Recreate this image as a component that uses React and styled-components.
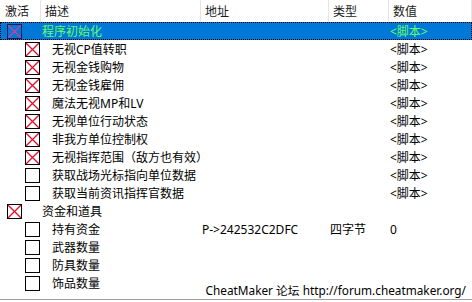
import React from "react";
import styled, { createGlobalStyle } from "styled-components";

const GlobalStyle = createGlobalStyle`
	html, body {
		margin: 0;
		padding: 0;
		background: #ffffff;
	}
	body {
		font-family: "Noto Sans", "Noto Sans CJK SC", sans-serif;
		font-size: 12px;
		color: #000000;
	}
`;

const COLS = "41px 160px 128px 60px 1fr";

const Window = styled.div`
	position: relative;
	width: 472px;
	height: 299px;
	border-bottom: 1px solid #a0a0a0;
	overflow: hidden;
	background: #ffffff;
`;

const Header = styled.div`
	display: grid;
	grid-template-columns: ${COLS};
	height: 22px;
`;

const HeaderCell = styled.div`
	display: flex;
	align-items: center;
	padding-left: ${(p) => (p.$first ? "5px" : "4px")};
	border-right: 1px solid #e5e5e5;
	color: #1a1a1a;
	white-space: nowrap;
`;

const Row = styled.div`
	display: grid;
	grid-template-columns: ${COLS};
	height: 18px;
	box-sizing: border-box;
	background: ${(p) => (p.$selected ? "#0078d7" : "transparent")};
	outline: ${(p) => (p.$selected ? "1px dotted #000" : "none")};
	outline-offset: -1px;
	color: ${(p) => (p.$selected ? "#66ff66" : "#000")};
`;

const Cell = styled.div`
	display: flex;
	align-items: center;
	white-space: nowrap;
	padding-left: ${(p) => p.$pad || 0}px;
`;

const CheckCell = styled.div`
	display: flex;
	align-items: center;
	padding-left: ${(p) => (p.$child ? 25 : 7)}px;
`;

const Box = styled.span`
	position: relative;
	display: block;
	width: 15px;
	height: 15px;
	box-sizing: border-box;
	border: 1px solid ${(p) => (p.$selected ? "#202050" : "#000")};
	background: ${(p) => (p.$selected ? "#0078d7" : "#fff")};
	svg {
		position: absolute;
		left: 0;
		top: 0;
		display: block;
	}
`;

const Footer = styled.div`
	position: absolute;
	right: 6px;
	bottom: 1px;
	white-space: nowrap;
	font-size: 11.8px;
	color: #000;
`;

const Check = ({ checked, selected }) => {
	const color = selected ? "#d23c9c" : "#e0102a";
	return (
		<Box $selected={selected}>
			{checked && (
				<svg width="13" height="13" viewBox="0 0 13 13">
					<line x1="0" y1="0" x2="13" y2="13" stroke={color} strokeWidth="1.3" />
					<line x1="13" y1="0" x2="0" y2="13" stroke={color} strokeWidth="1.3" />
				</svg>
			)}
		</Box>
	);
};

const rows = [
	{ name: "程序初始化", checked: true, root: true, selected: true, value: "<脚本>" },
	{ name: "无视CP值转职", checked: true, value: "<脚本>" },
	{ name: "无视金钱购物", checked: true, value: "<脚本>" },
	{ name: "无视金钱雇佣", checked: true, value: "<脚本>" },
	{ name: "魔法无视MP和LV", checked: true, value: "<脚本>" },
	{ name: "无视单位行动状态", checked: true, value: "<脚本>" },
	{ name: "非我方单位控制权", checked: true, value: "<脚本>" },
	{ name: "无视指挥范围（敌方也有效）", checked: true, value: "<脚本>" },
	{ name: "获取战场光标指向单位数据", value: "<脚本>" },
	{ name: "获取当前资讯指挥官数据", value: "<脚本>" },
	{ name: "资金和道具", checked: true, root: true },
	{ name: "持有资金", address: "P->242532C2DFC", type: "四字节", value: "0" },
	{ name: "武器数量" },
	{ name: "防具数量" },
	{ name: "饰品数量" },
];

export default function App() {
	return (
		<>
			<GlobalStyle />
			<Window>
				<Header>
					<HeaderCell $first>激活</HeaderCell>
					<HeaderCell>描述</HeaderCell>
					<HeaderCell>地址</HeaderCell>
					<HeaderCell>类型</HeaderCell>
					<HeaderCell>数值</HeaderCell>
				</Header>
				{rows.map((r, i) => (
					<Row key={i} $selected={r.selected}>
						<CheckCell $child={!r.root}>
							<Check checked={r.checked} selected={r.selected} />
						</CheckCell>
						<Cell $pad={r.root ? 1 : 11}>{r.name}</Cell>
						<Cell $pad={1}>{r.address}</Cell>
						<Cell $pad={1}>{r.type}</Cell>
						<Cell $pad={1}>{r.value}</Cell>
					</Row>
				))}
				<Footer>CheatMaker 论坛 http://forum.cheatmaker.org/</Footer>
			</Window>
		</>
	);
}
